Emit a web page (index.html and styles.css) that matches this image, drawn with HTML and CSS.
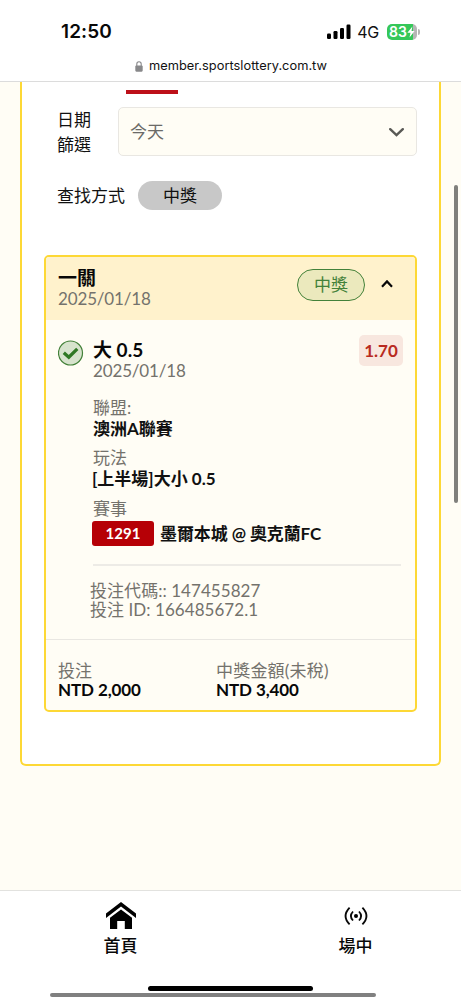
FILE: index.html
```
<!DOCTYPE html>
<html lang="zh-Hant">
<head>
<meta charset="utf-8">
<title>投注紀錄</title>
<link rel="stylesheet" href="styles.css">
</head>
<body>
<div class="screen">
  <header class="browser">
    <div class="status">
      <span class="clock">12:50</span>
      <div class="indicators">
        <svg class="signal" width="24" height="16" viewBox="0 0 24 16"><rect x="0" y="9.5" width="4" height="5.5" rx="1.2"/><rect x="6.5" y="7" width="4" height="8" rx="1.2"/><rect x="13" y="4" width="4" height="11" rx="1.2"/><rect x="19.5" y="0.5" width="4" height="14.5" rx="1.2"/></svg>
        <span class="network">4G</span>
        <div class="battery">
          <span class="level">83</span>
          <svg class="bolt" width="8" height="12" viewBox="0 0 8 12"><path d="M5.4 0.5 0.4 6.7H3.5L2.5 11.5 7.6 5.1H4.5Z"/></svg>
        </div>
        <i class="battery-tip"></i>
      </div>
    </div>
    <div class="address">
      <svg width="8" height="11" viewBox="0 0 8 11"><rect x="0.3" y="4.5" width="7.4" height="6.2" rx="1.1" fill="#88888a"/><path d="M1.8 5V3a2.2 2.2 0 0 1 4.4 0v2" fill="none" stroke="#88888a" stroke-width="1.1"/></svg>
      <span class="url">member.sportslottery.com.tw</span>
    </div>
  </header>

  <main class="content">
    <section class="panel">
      <div class="tabs"><i class="tab-line"></i></div>
      <div class="date-filter">
        <label class="date-label">日期<br>篩選</label>
        <div class="select">
          <span>今天</span>
          <svg width="15" height="9" viewBox="0 0 15 9"><path d="M1.2 1.2 7.5 7.2 13.8 1.2" fill="none" stroke="#595955" stroke-width="2.4" stroke-linecap="round"/></svg>
        </div>
      </div>
      <div class="find">
        <span class="find-label">查找方式</span>
        <span class="pill">中獎</span>
      </div>

      <article class="ticket">
        <header class="ticket-head">
          <div class="ticket-title">
            <h2>一關</h2>
            <p class="date">2025/01/18</p>
          </div>
          <span class="won">中獎</span>
          <svg class="caret" width="14" height="10" viewBox="0 0 14 10"><path d="M2 7.8 7 2.4 12 7.8" fill="none" stroke="#080808" stroke-width="2.2"/></svg>
        </header>
        <div class="bet">
          <svg class="check" width="26" height="26" viewBox="0 0 26 26"><circle cx="12.500" cy="13" r="12" fill="#d7e3cd" stroke="#438139" stroke-width="1.2"/><path d="M5.800 12.800 10.800 17.200 19.300 8.800" fill="none" stroke="#2f7824" stroke-width="3.3"/></svg>
          <div class="bet-main">
            <div class="pick-row">
              <div>
                <h3>大 0.5</h3>
                <p class="date">2025/01/18</p>
              </div>
              <span class="odds">1.70</span>
            </div>
            <dl class="facts">
              <dt>聯盟:</dt><dd>澳洲A聯賽</dd>
              <dt>玩法</dt><dd class="play">[上半場]大小 0.5</dd>
              <dt>賽事</dt><dd class="match"><span class="code">1291</span><span class="teams">墨爾本城 @ 奧克蘭FC</span></dd>
            </dl>
            <div class="ids">
              <p class="id-code">投注代碼:: 147455827</p>
              <p class="id-num">投注 ID: 166485672.1</p>
            </div>
          </div>
        </div>
        <footer class="totals">
          <div class="total"><p>投注</p><strong>NTD 2,000</strong></div>
          <div class="total"><p class="prize">中獎金額(未稅)</p><strong>NTD 3,400</strong></div>
        </footer>
      </article>
    </section>
    <i class="scroll-y"></i>
  </main>

  <nav class="bottom">
    <a class="nav-item">
      <svg width="30" height="28" viewBox="0 0 30 28"><path d="M15 0 30 11.5V16L15 4.6 0 16V11.5Z"/><path d="M15 7.5 26 15.8V27H18.8V19H11.2V27H4V15.8Z"/></svg>
      <span>首頁</span>
    </a>
    <a class="nav-item">
      <svg width="24" height="28" viewBox="0 0 24 28"><circle cx="12" cy="14" r="2"/><g fill="none" stroke="#080808" stroke-width="1.8"><path d="M9 9.500Q4.800 14 9 18.500M15 9.500Q19.200 14 15 18.500M5.600 5.600Q-2.500 14 5.600 22.400M18.400 5.600Q26.500 14 18.400 22.400"/></g></svg>
      <span>場中</span>
    </a>
    <i class="home-bar"></i>
    <i class="scroll-x"></i>
  </nav>
</div>
</body>
</html>
```
FILE: styles.css
```
* { box-sizing: border-box; }
body { margin: 0; font-family: Lato, "Noto Sans CJK TC", sans-serif; font-size: 17px; color: #111; }
h2, h3, p, dl, dd { margin: 0; }
i { display: block; }

.screen { width: 461px; height: 1000px; display: flex; flex-direction: column; overflow: hidden; background: #fff; }

.browser { height: 82px; flex: none; border-bottom: 1px solid #dcdcdc; font-family: Inter, sans-serif; }
.status { display: flex; justify-content: space-between; align-items: center; height: 52px; padding: 11px 41px 0 61px; }
.clock { font-size: 19px; font-weight: 600; letter-spacing: 0.1px; line-height: 24px; color: #080808; }
.indicators { display: flex; align-items: center; }
.network { margin-left: 8px; font-size: 16px; line-height: 24px; letter-spacing: -0.2px; }
.signal { margin-right: -2px; }
.battery { display: flex; align-items: center; justify-content: center; width: 30px; height: 16px; margin-left: 8px; border-radius: 5px; background: linear-gradient(90deg, #35c759 26px, #b5b5b5 26px); color: #fff; }
.level { font-size: 14px; font-weight: 600; line-height: 16px; }
.bolt { fill: #fff; }
.battery-tip { width: 2px; height: 6px; margin-left: 1px; border-radius: 0 2px 2px 0; background: #b5b5b5; }
.address { display: flex; justify-content: center; align-items: center; gap: 6px; height: 28px; padding-left: 1px; }
.url { font-size: 12.8px; line-height: 18px; letter-spacing: 0.03px; }

.content { position: relative; height: 808px; flex: none; padding: 0 20px; background: #fffdf5; }
.panel { height: 684px; border: 2.5px solid #fdd835; border-top: 0; border-radius: 0 0 6px 6px; padding: 0 22px; background: #fff; }
.tabs { height: 25px; padding: 8px 0 0 82px; }
.tab-line { width: 52px; height: 4px; background: #bd1019; }
.date-filter { display: flex; height: 49px; padding-left: 13px; }
.date-label { width: 61px; line-height: 25px; }
.select { display: flex; flex: 1; align-items: center; justify-content: space-between; padding: 0 12px 0 11px; border: 1.5px solid #e9e7e2; border-radius: 5px; background: #fffdf5; color: #6b6a67; }
.select span { padding-bottom: 2px; }
.select svg { margin-top: 2px; }
.find { display: flex; align-items: center; gap: 13px; height: 29px; margin-top: 25px; padding-left: 13px; }
.find-label { padding-bottom: 2px; }
.pill { width: 84px; height: 29px; border-radius: 15px; background: #c8c8c8; line-height: 29px; text-align: center; }

.ticket { height: 457px; margin-top: 45px; border: 2.5px solid #fdd835; border-radius: 5px; background: #fffdf5; overflow: hidden; }
.ticket-head { display: flex; align-items: center; height: 63px; padding: 0 21px 0 12px; background: #fff2cc; }
.ticket-title { flex: 1; }
h2 { font-size: 19px; line-height: 20px; font-weight: 700; color: #080808; }
.date { line-height: 21px; color: #74726c; letter-spacing: -0.15px; }
.won { width: 68px; height: 32px; margin-right: 15px; border: 1.5px solid #438139; border-radius: 16px; background: #ebe9bd; color: #438139; line-height: 30px; text-align: center; margin-top: -8px; }
.caret { margin-top: -9px; }
.bet { display: flex; gap: 9px; height: 319px; padding: 20px 13px 0 12px; }
.check { flex: none; }
.bet-main { flex: 1; }
.pick-row { display: flex; justify-content: space-between; height: 58px; }
h3 { font-size: 19px; line-height: 20px; font-weight: 700; color: #080808; }
.odds { width: 44px; height: 31px; margin: -5px -1px 0 0; border-radius: 5px; background: #f8e7df; color: #b92a20; font-weight: 700; line-height: 32px; text-align: center; }
.facts { height: 168px; margin-right: 1px; border-bottom: 2px solid #edebe6; }
dt { height: 20px; line-height: 20px; color: #74726c; }
dd { height: 21px; line-height: 21px; margin-bottom: 9px; color: #111; font-weight: 700; }
.facts .play { height: 22px; line-height: 22px; margin-left: -1px; }
.match { display: flex; align-items: center; height: 25px; margin: 2px 0 0 -1px; }
.code { width: 62px; height: 25px; border-radius: 3px; background: #b60006; color: #fff; font-size: 15px; line-height: 25px; text-align: center; }
.teams { margin-left: 6px; letter-spacing: -0.1px; }
.ids { margin-left: -3px; padding-top: 15px; color: #74726c; letter-spacing: 0.05px; }
.ids p { line-height: 19px; }
.totals { display: flex; height: 71px; padding: 21px 12px 0; border-top: 1.5px solid #e9e7e2; }
.total { width: 158px; }
.total p { line-height: 20px; color: #74726c; white-space: nowrap; }
.total .prize { letter-spacing: 0.2px; }
.total strong { display: block; line-height: 18px; color: #080808; letter-spacing: -0.1px; }

.scroll-y { position: absolute; right: 3px; top: 103px; width: 4px; height: 318px; border-radius: 2px; background: #80807c; }

.bottom { position: relative; flex: 1; display: grid; grid-template-columns: 235px 235px; align-content: start; padding: 11px 0 0 3px; border-top: 1px solid #e2e2df; background: #fff; }
.nav-item { display: flex; flex-direction: column; align-items: center; font-weight: 500; color: #080808; }
.nav-item span { line-height: 22px; margin-top: 5px; }
.home-bar { position: absolute; left: 148px; bottom: 9px; width: 165px; height: 5px; border-radius: 3px; background: #000; }
.scroll-x { position: absolute; left: 50px; bottom: 3px; width: 326px; height: 4px; border-radius: 2px; background: #808080; }
```
